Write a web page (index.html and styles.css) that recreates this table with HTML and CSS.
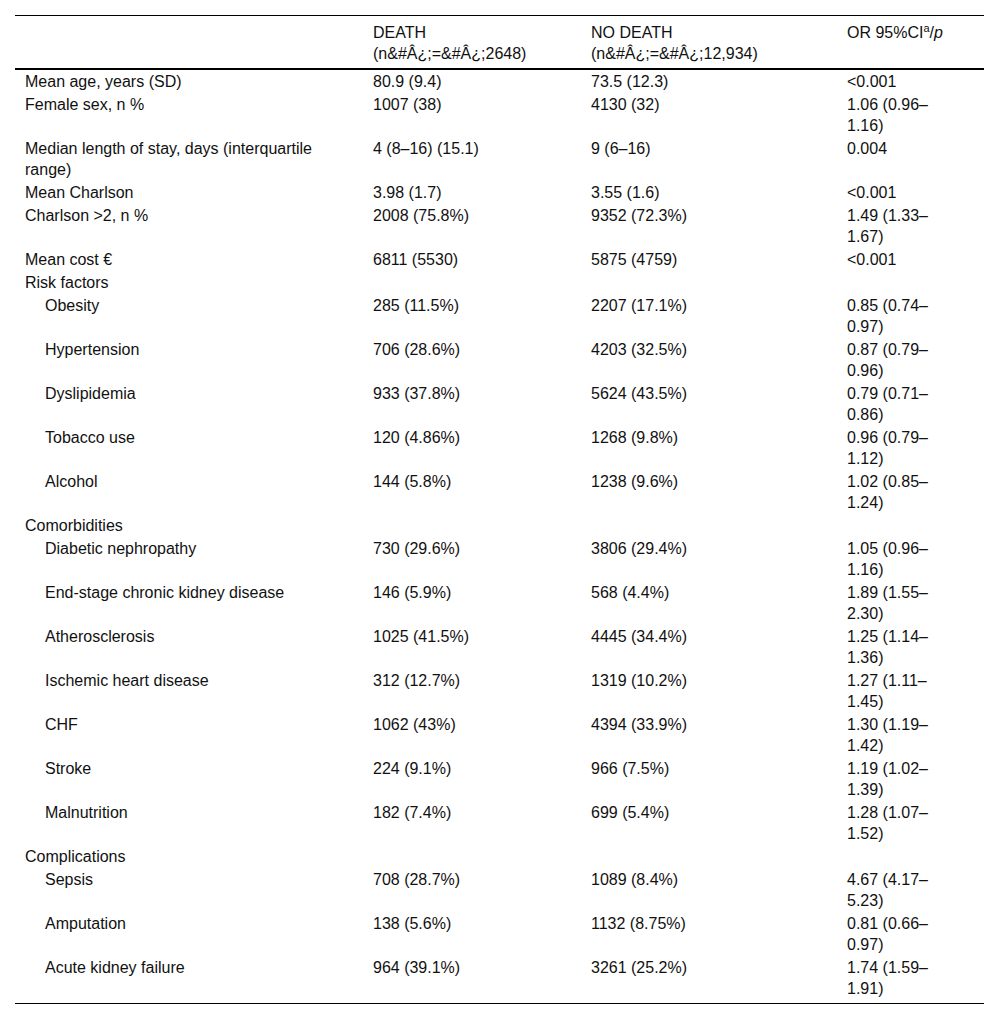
FILE: index.html
```html
<!DOCTYPE html>
<html>
<head>
<meta charset="utf-8">
<link rel="stylesheet" href="styles.css">
</head>
<body>
<div class="wrap">
<table class="tbl">
<colgroup>
<col class="c1"><col class="c2"><col class="c3"><col class="c4">
</colgroup>
<thead>
<tr>
<th></th>
<th>DEATH<br>(n&amp;#Â¿;=&amp;#Â¿;2648)</th>
<th>NO DEATH<br>(n&amp;#Â¿;=&amp;#Â¿;12,934)</th>
<th class="or">OR 95%CI<sup>a</sup>/<i>p</i></th>
</tr>
</thead>
<tbody>
<tr><td>Mean age, years (SD)</td><td>80.9 (9.4)</td><td>73.5 (12.3)</td><td class="or">&lt;0.001</td></tr>
<tr><td>Female sex, n %</td><td>1007 (38)</td><td>4130 (32)</td><td class="or">1.06 (0.96–1.16)</td></tr>
<tr><td>Median length of stay, days (interquartile range)</td><td>4 (8–16) (15.1)</td><td>9 (6–16)</td><td class="or">0.004</td></tr>
<tr><td>Mean Charlson</td><td>3.98 (1.7)</td><td>3.55 (1.6)</td><td class="or">&lt;0.001</td></tr>
<tr><td>Charlson &gt;2, n %</td><td>2008 (75.8%)</td><td>9352 (72.3%)</td><td class="or">1.49 (1.33–1.67)</td></tr>
<tr><td>Mean cost €</td><td>6811 (5530)</td><td>5875 (4759)</td><td class="or">&lt;0.001</td></tr>
<tr><td>Risk factors</td><td></td><td></td><td class="or"></td></tr>
<tr><td class="sub">Obesity</td><td>285 (11.5%)</td><td>2207 (17.1%)</td><td class="or">0.85 (0.74–0.97)</td></tr>
<tr><td class="sub">Hypertension</td><td>706 (28.6%)</td><td>4203 (32.5%)</td><td class="or">0.87 (0.79–0.96)</td></tr>
<tr><td class="sub">Dyslipidemia</td><td>933 (37.8%)</td><td>5624 (43.5%)</td><td class="or">0.79 (0.71–0.86)</td></tr>
<tr><td class="sub">Tobacco use</td><td>120 (4.86%)</td><td>1268 (9.8%)</td><td class="or">0.96 (0.79–1.12)</td></tr>
<tr><td class="sub">Alcohol</td><td>144 (5.8%)</td><td>1238 (9.6%)</td><td class="or">1.02 (0.85–1.24)</td></tr>
<tr><td>Comorbidities</td><td></td><td></td><td class="or"></td></tr>
<tr><td class="sub">Diabetic nephropathy</td><td>730 (29.6%)</td><td>3806 (29.4%)</td><td class="or">1.05 (0.96–1.16)</td></tr>
<tr><td class="sub">End-stage chronic kidney disease</td><td>146 (5.9%)</td><td>568 (4.4%)</td><td class="or">1.89 (1.55–2.30)</td></tr>
<tr><td class="sub">Atherosclerosis</td><td>1025 (41.5%)</td><td>4445 (34.4%)</td><td class="or">1.25 (1.14–1.36)</td></tr>
<tr><td class="sub">Ischemic heart disease</td><td>312 (12.7%)</td><td>1319 (10.2%)</td><td class="or">1.27 (1.11–1.45)</td></tr>
<tr><td class="sub">CHF</td><td>1062 (43%)</td><td>4394 (33.9%)</td><td class="or">1.30 (1.19–1.42)</td></tr>
<tr><td class="sub">Stroke</td><td>224 (9.1%)</td><td>966 (7.5%)</td><td class="or">1.19 (1.02–1.39)</td></tr>
<tr><td class="sub">Malnutrition</td><td>182 (7.4%)</td><td>699 (5.4%)</td><td class="or">1.28 (1.07–1.52)</td></tr>
<tr><td>Complications</td><td></td><td></td><td class="or"></td></tr>
<tr><td class="sub">Sepsis</td><td>708 (28.7%)</td><td>1089 (8.4%)</td><td class="or">4.67 (4.17–5.23)</td></tr>
<tr><td class="sub">Amputation</td><td>138 (5.6%)</td><td>1132 (8.75%)</td><td class="or">0.81 (0.66–0.97)</td></tr>
<tr class="last"><td class="sub">Acute kidney failure</td><td>964 (39.1%)</td><td>3261 (25.2%)</td><td class="or">1.74 (1.59–1.91)</td></tr>
</tbody>
</table>
</div>
</body>
</html>
```

FILE: styles.css
```css
html, body {
  margin: 0;
  padding: 0;
  background: #fff;
}
.wrap {
  padding: 15px 0 0 15px;
}
.tbl {
  width: 969px;
  table-layout: fixed;
  border-collapse: collapse;
  font-family: "Liberation Sans", Arial, sans-serif;
  font-size: 16px;
  line-height: 21px;
  color: #111;
  border-top: 1px solid #000;
  border-bottom: 1px solid #000;
}
.c1 { width: 348px; }
.c2 { width: 218px; }
.c3 { width: 256px; }
.c4 { width: 147px; }
.tbl th {
  font-weight: normal;
  text-align: left;
  vertical-align: top;
  padding: 6px 10px 4px 10px;
  border-bottom: 2px solid #000;
}
.tbl td {
  vertical-align: top;
  padding: 1px 10px;
}
.tbl td:first-child {
  padding-right: 30px;
}
.tbl .sub {
  padding-left: 30px;
}
.tbl .or {
  padding-right: 30px;
}
.tbl .last td {
  padding-bottom: 4px;
}
.tbl sup {
  font-size: 11px;
  line-height: 0;
  vertical-align: 6px;
}
```
